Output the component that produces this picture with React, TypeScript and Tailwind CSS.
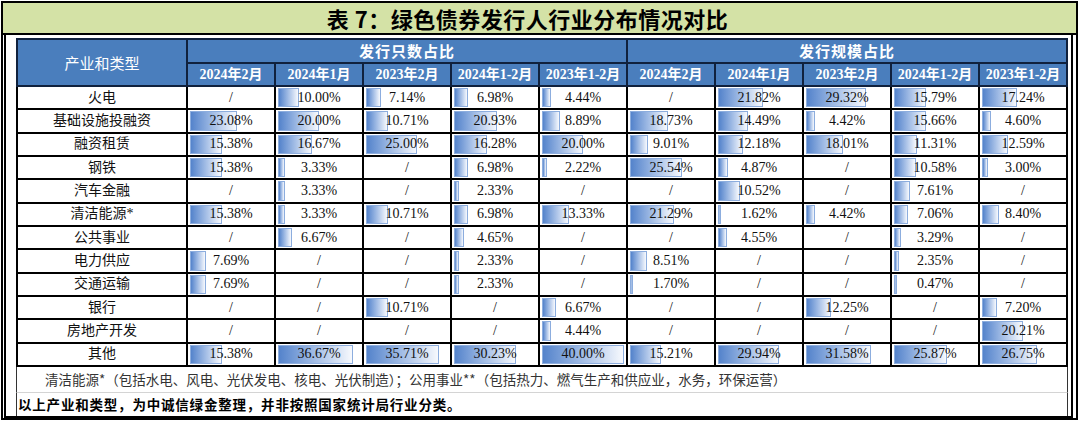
import React from "react";

const periods = ["2024年2月", "2024年1月", "2023年2月", "2024年1-2月", "2023年1-2月"];

const rows: [string, string[]][] = [
  ["火电", ["/", "10.00%", "7.14%", "6.98%", "4.44%", "/", "21.82%", "29.32%", "15.79%", "17.24%"]],
  ["基础设施投融资", ["23.08%", "20.00%", "10.71%", "20.93%", "8.89%", "18.73%", "14.49%", "4.42%", "15.66%", "4.60%"]],
  ["融资租赁", ["15.38%", "16.67%", "25.00%", "16.28%", "20.00%", "9.01%", "12.18%", "18.01%", "11.31%", "12.59%"]],
  ["钢铁", ["15.38%", "3.33%", "/", "6.98%", "2.22%", "25.54%", "4.87%", "/", "10.58%", "3.00%"]],
  ["汽车金融", ["/", "3.33%", "/", "2.33%", "/", "/", "10.52%", "/", "7.61%", "/"]],
  ["清洁能源*", ["15.38%", "3.33%", "10.71%", "6.98%", "13.33%", "21.29%", "1.62%", "4.42%", "7.06%", "8.40%"]],
  ["公共事业", ["/", "6.67%", "/", "4.65%", "/", "/", "4.55%", "/", "3.29%", "/"]],
  ["电力供应", ["7.69%", "/", "/", "2.33%", "/", "8.51%", "/", "/", "2.35%", "/"]],
  ["交通运输", ["7.69%", "/", "/", "2.33%", "/", "1.70%", "/", "/", "0.47%", "/"]],
  ["银行", ["/", "/", "10.71%", "/", "6.67%", "/", "/", "12.25%", "/", "7.20%"]],
  ["房地产开发", ["/", "/", "/", "/", "4.44%", "/", "/", "/", "/", "20.21%"]],
  ["其他", ["15.38%", "36.67%", "35.71%", "30.23%", "40.00%", "15.21%", "29.94%", "31.58%", "25.87%", "26.75%"]],
];

const serif = "font-['Liberation_Serif','Noto_Sans_CJK_SC',serif]";
const sans = "font-['Noto_Sans_CJK_SC','Liberation_Sans',sans-serif]";

function ValueCell({ value }: { value: string }) {
  const num = value === "/" ? 0 : parseFloat(value);
  return (
    <td className="relative border-2 border-black p-0 text-center text-[14px] leading-[18px] text-[#111]">
      {num > 0 && (
        <span
          className="absolute left-[2px] top-[1px] bottom-[1px] border border-[#8cadde] bg-linear-to-r from-[#5483cb] to-[#f7f9fd]"
          style={{ width: `${Math.max(3, num * 2.05)}px` }}
        />
      )}
      <span className="relative">{value}</span>
    </td>
  );
}

export default function App() {
  return (
    <div className={`w-[1080px] h-[422px] bg-white p-px ${serif}`}>
      <div className="w-[1077px] h-[419px] border-2 border-black flex flex-col">
        {/* title */}
        <div className="h-[32px] shrink-0 bg-[#d4e2a6] border-b-2 border-black flex items-center justify-center">
          <span className={`${sans} text-[22px] leading-[28px] font-bold text-black tracking-[0.5px] -ml-6`}>
            表 7：绿色债券发行人行业分布情况对比
          </span>
        </div>

        <div className="flex-1 ml-px mr-[3px] mb-px border-l-2 border-r-2 border-b-2 border-black pl-[10px] pt-[3px]">
          <table className="w-[1052px] table-fixed border-collapse leading-[18px]">
            <colgroup>
              <col className="w-[170px]" />
              {Array.from({ length: 10 }).map((_, i) => (
                <col key={i} />
              ))}
            </colgroup>
            <thead>
              <tr className="h-[24px] bg-[#4a7ebd] text-white">
                <th rowSpan={2} className={`border-2 border-[#10213d] p-0 ${sans} text-[15px] font-normal`}>
                  产业和类型
                </th>
                <th colSpan={5} className={`border-2 border-[#10213d] p-0 ${sans} text-[15px] font-bold tracking-[1px]`}>
                  发行只数占比
                </th>
                <th colSpan={5} className={`border-2 border-[#10213d] p-0 ${sans} text-[15px] font-bold tracking-[1px]`}>
                  发行规模占比
                </th>
              </tr>
              <tr className="h-[23px] bg-[#4a7ebd] text-white">
                {[...periods, ...periods].map((p, i) => (
                  <th key={i} className="border-2 border-[#10213d] p-0 text-[14px] font-bold whitespace-nowrap">
                    {p}
                  </th>
                ))}
              </tr>
            </thead>
            <tbody>
              {rows.map(([label, values]) => (
                <tr key={label} className="h-[23.33px]">
                  <td className="border-2 border-black p-0 text-center text-[14px] leading-[18px] text-[#111]">{label}</td>
                  {values.map((v, i) => (
                    <ValueCell key={i} value={v} />
                  ))}
                </tr>
              ))}
            </tbody>
          </table>

          <div className="w-[1052px] h-[26px] border-l border-r border-b border-l-[#333] border-r-[#333] border-b-[#d4d4d4] flex items-center pl-[28px]">
            <span className={`${sans} text-[13.5px] leading-[18px] text-[#333]`}>
              清洁能源*（包括水电、风电、光伏发电、核电、光伏制造）；公用事业**（包括热力、燃气生产和供应业，水务，环保运营）
            </span>
          </div>
          <div className="w-[1052px] h-[23px] border-l border-r border-[#333] flex items-center pl-px">
            <span className={`${sans} text-[13.5px] leading-[18px] font-bold text-black tracking-[0.8px]`}>
              以上产业和类型，为中诚信绿金整理，并非按照国家统计局行业分类。
            </span>
          </div>
        </div>
      </div>
    </div>
  );
}
